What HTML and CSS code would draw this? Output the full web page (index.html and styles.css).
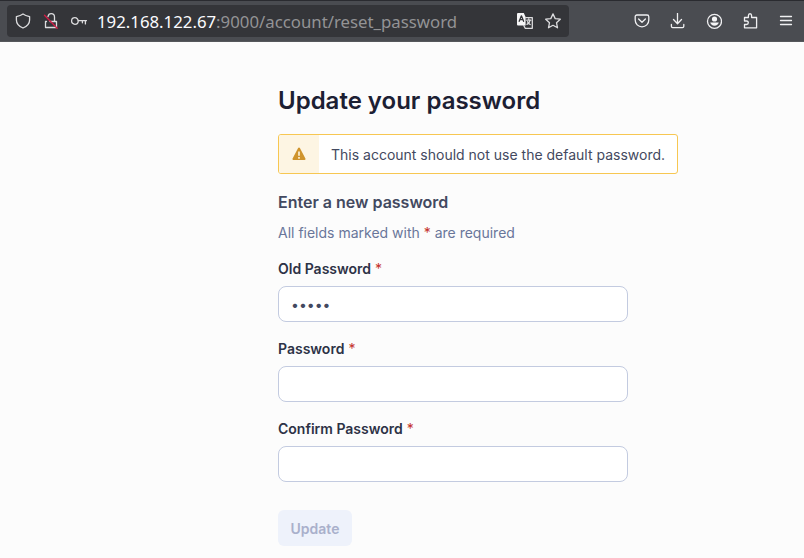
FILE: index.html
```html
<!DOCTYPE html>
<html lang="en">
<head>
<meta charset="utf-8">
<title>Update your password</title>
<link rel="stylesheet" href="styles.css">
</head>
<body>
<header class="toolbar">
  <div class="address">
    <svg class="icon" viewBox="0 0 16 16"><path d="M8 1C6 2.500 3.800 3.100 1.400 3.600V7c0 3.800 2.700 6.400 6.600 8 3.900-1.600 6.600-4.200 6.600-8V3.600C12.200 3.100 10 2.500 8 1Z"/></svg>
    <svg class="icon" viewBox="0 0 16 16"><path d="M3.500 8.500h-1v6h11v-6H7M5 3.600c.3-1.700 1.500-2.900 3.200-2.900 1.900 0 3.300 1.400 3.300 3.300v4.300"/><path class="slash" d="m1.500 2.300 12.700 12.900"/></svg>
    <svg class="icon" viewBox="0 0 16 16"><circle cx="3.900" cy="8" r="3.300"/><path d="M7.200 7.600h8.300M14.400 7.600v3.300M11.400 7.600v2.200"/></svg>
    <span class="url"><span class="host">192.168.122.67</span>:9000/account/reset_password</span>
    <svg class="icon" viewBox="0 0 16 16"><path class="solid" d="M1 0h5.800L8.600 4v8.500H1a1 1 0 0 1-1-1V1a1 1 0 0 1 1-1Z"/><path class="letter" d="m2.200 8.300 2.200-5.500 2.200 5.500M3 6.600h2.800"/><path d="M8.700 4.600h6.600v10.700H8.200l-1.300-2.600M9.700 7.200h4M11.800 6v1.200M13 7.400c-.3 2-1.500 3.200-3 4M10.700 8.700c.4 1.300 1.200 2.200 2.500 2.800"/></svg>
    <svg class="icon" viewBox="0 0 16 16"><path d="m8 .9 2.200 4.700 5.100.6-3.800 3.500 1 5.100L8 12.300l-4.500 2.500 1-5.100L.7 6.200l5.100-.6Z"/></svg>
  </div>
  <nav class="actions">
    <svg class="icon" viewBox="0 0 16 16"><path d="M2.900 2h10.200c1 0 1.700.7 1.700 1.700V7c0 4-3 6.800-6.800 6.800S1.200 11 1.200 7V3.700C1.200 2.700 1.900 2 2.900 2ZM4.600 6 8 9.300 11.400 6"/></svg>
    <svg class="icon" viewBox="0 0 16 16"><path d="M7.500 .4v10M3.500 6.500l4 4.200 4-4.200M1.400 11.500v1.800c0 .8.500 1.300 1.300 1.300h9.800c.8 0 1.300-.5 1.300-1.300v-1.800"/></svg>
    <svg class="icon" viewBox="0 0 16 16"><circle cx="8.500" cy="8.300" r="7"/><circle class="solid" cx="8.500" cy="6" r="2.600"/><path class="solid" d="M4.200 9.600h8.600c-.5 1.900-2 3.100-4.300 3.100S4.700 11.500 4.200 9.600Z"/></svg>
    <svg class="icon" viewBox="0 0 16 16"><path d="M2.500 7V4.500h3.900V2.700c0-2.600 3.200-2.600 3.200 0v1.800h5v10.300H2.500v-3.300h2c2.400 0 2.400-3.500 0-3.500h-2Z"/></svg>
    <svg class="icon" viewBox="0 0 16 16"><path d="M2.500 3.500h11M2.500 7.500h11M2.500 11.500h11"/></svg>
  </nav>
</header>
<main class="content">
  <h1>Update your password</h1>
  <div class="notice">
    <span class="notice-icon"><svg viewBox="0 0 14 14"><path d="M7 .5c.4 0 .7.200.9.600l5.500 10.500c.4.700 0 1.400-.8 1.400H1.400c-.8 0-1.200-.7-.8-1.400L6.100 1.100C6.300.700 6.600.500 7 .500Z"/><path class="mark" d="M7 4.600v4.100M7 10v1.700"/></svg></span>
    <p>This account should not use the default password.</p>
  </div>
  <h2>Enter a new password</h2>
  <p class="hint">All fields marked with <span>*</span> are required</p>
  <form>
    <div class="field">
      <label for="old">Old Password <span>*</span></label>
      <input id="old" type="text" value="•••••">
    </div>
    <div class="field">
      <label for="new">Password <span>*</span></label>
      <input id="new" type="password">
    </div>
    <div class="field">
      <label for="confirm">Confirm Password <span>*</span></label>
      <input id="confirm" type="password">
    </div>
    <button type="button" disabled>Update</button>
  </form>
</main>
</body>
</html>
```
FILE: styles.css
```css
* { box-sizing: border-box; }
body {
  margin: 0;
  height: 558px;
  overflow: hidden;
  background: #fcfcfc;
  color: #1c2033;
  font-family: Inter, sans-serif;
}
h1, h2, p { margin: 0; }

.toolbar {
  display: flex;
  align-items: center;
  justify-content: space-between;
  height: 42px;
  padding: 0 10px 0 7px;
  background: #4a4c51;
  border-top: 1px solid #2a2b30;
  border-bottom: 1px solid #56585c;
}
.address {
  display: flex;
  align-items: center;
  gap: 12px;
  width: 562px;
  height: 32px;
  padding: 0 8px;
  border-radius: 4px;
  background: #343539;
}
.url {
  flex: 1;
  margin-left: -2px;
  padding-top: 2px;
  color: #939395;
  font: 16.8px/24px "Noto Sans", sans-serif;
  white-space: nowrap;
}
.host { color: #fbfbfe; }
.actions { display: flex; gap: 20px; }
.icon {
  flex: none;
  width: 16px;
  height: 16px;
  fill: none;
  stroke: #f0f0f2;
  stroke-width: 1.3;
  stroke-linecap: round;
  stroke-linejoin: round;
}
.address .icon { stroke: #dcdcde; }
.icon .solid { fill: #f6f6f7; stroke: none; }
.icon .letter { stroke: #343539; }
.icon .slash { stroke: #d51b46; }

.content { width: 400px; margin: 42px 0 0 278px; }
h1 { font-size: 24px; line-height: 34px; font-weight: 600; }
.notice {
  display: flex;
  height: 40px;
  margin-top: 16px;
  overflow: hidden;
  border: 1px solid #f7c752;
  border-radius: 3px;
  background: #fff;
}
.notice-icon {
  display: flex;
  align-items: center;
  justify-content: center;
  width: 40px;
  background: #fdf5e3;
}
.notice svg { width: 14px; height: 14px; fill: #cf942d; }
.notice .mark { stroke: #fdf5e3; stroke-width: 1.6; }
.notice p {
  padding-left: 12px;
  color: #434960;
  font-size: 14px;
  line-height: 39px;
  white-space: nowrap;
}
h2 {
  margin-top: 16px;
  color: #434960;
  font-size: 16px;
  line-height: 24px;
  font-weight: 600;
}
.hint {
  margin-top: 9px;
  color: #69769a;
  font-size: 14px;
  line-height: 20px;
}
.hint span, .field span { color: #c4322b; }
.field { width: 350px; margin-top: 16px; }
.field + .field { margin-top: 17px; }
label {
  display: block;
  color: #2d3246;
  font-size: 14px;
  line-height: 20px;
  font-weight: 600;
}
label span { margin-left: .5px; font-weight: 400; }
input {
  display: block;
  width: 350px;
  height: 36px;
  margin-top: 7px;
  padding: 0 12px;
  border: 1px solid #c3cbe0;
  border-radius: 8px;
  outline: 0;
  background: #fff;
  color: #434960;
  font: 14px Inter, sans-serif;
}
button {
  display: block;
  width: 74px;
  height: 36px;
  margin-top: 28px;
  padding: 0;
  border: 0;
  border-radius: 6px;
  background: #eef2fb;
  color: #a9b0cb;
  font: 600 14px Inter, sans-serif;
}
```
